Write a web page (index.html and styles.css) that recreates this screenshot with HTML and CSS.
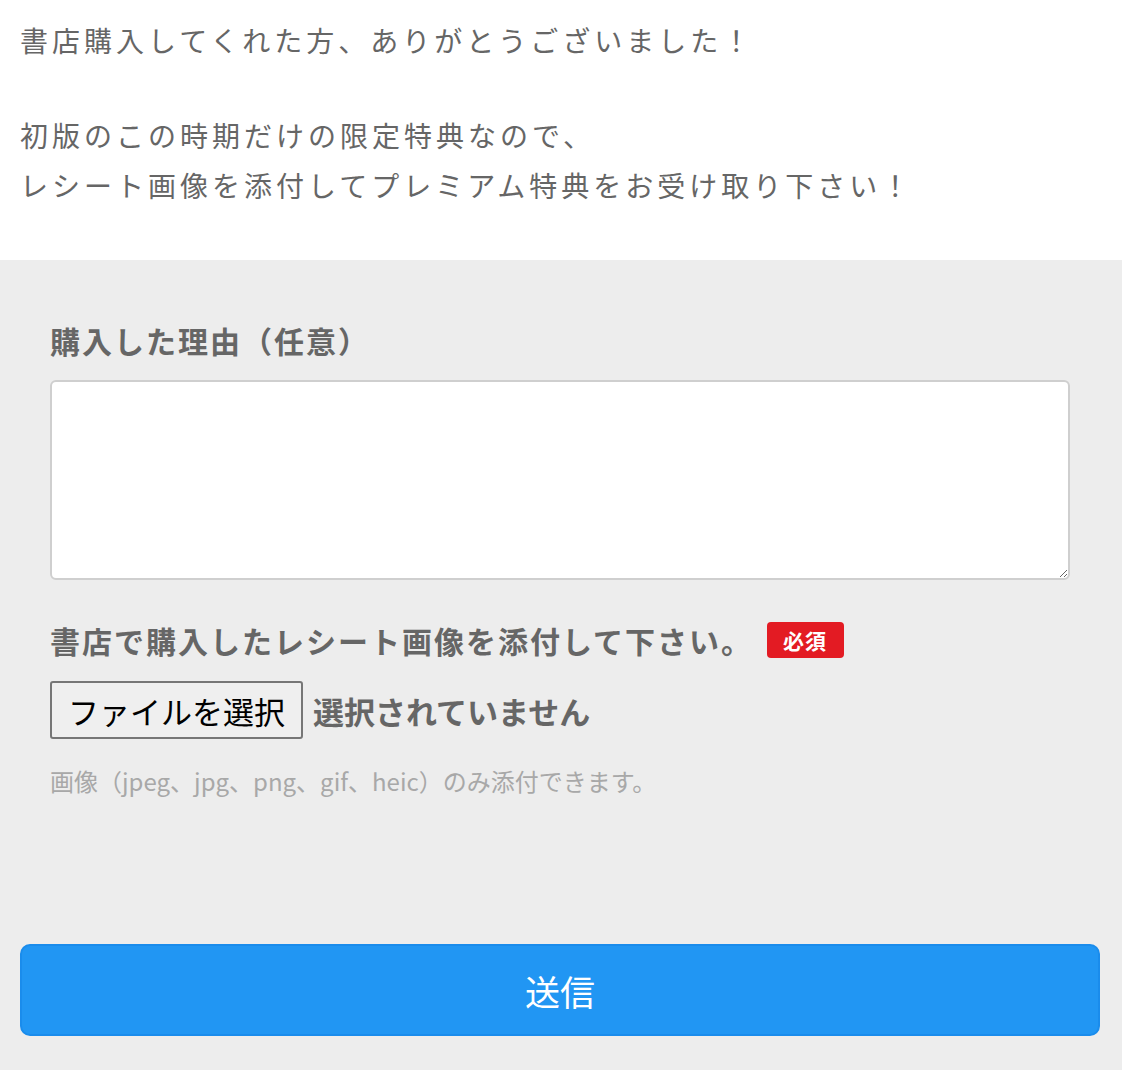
FILE: index.html
```html
<!DOCTYPE html>
<html lang="ja">
<head>
<meta charset="utf-8">
<title>レシート送信</title>
<link rel="stylesheet" href="styles.css">
</head>
<body>
<section class="intro">
  <p class="intro-p">書店購入してくれた方、ありがとうございました！</p>
  <p class="intro-p">初版のこの時期だけの限定特典なので、<br>レシート画像を添付してプレミアム特典をお受け取り下さい！</p>
</section>
<section class="form">
  <div class="fields">
    <div class="field">
      <label class="label">購入した理由（任意）</label>
      <textarea class="textarea"></textarea>
    </div>
    <div class="field field-file">
      <div class="label-row">
        <span class="label">書店で購入したレシート画像を添付して下さい。</span>
        <span class="badge">必須</span>
      </div>
      <div class="file-row">
        <span class="file-btn">ファイルを選択</span>
        <span class="file-status">選択されていません</span>
      </div>
      <p class="hint">画像（jpeg、jpg、png、gif、heic）のみ添付できます。</p>
    </div>
  </div>
  <div class="submit-wrap">
    <button class="submit" type="button">送信</button>
  </div>
</section>
</body>
</html>
```

FILE: styles.css
```css
html, body {
  margin: 0;
  padding: 0;
}
body {
  font-family: "Noto Sans CJK JP", "Noto Sans", "Liberation Sans", sans-serif;
  color: #666;
  background: #ededed;
}
.intro {
  background: #fff;
  padding: 15px 20px 50px;
}
.intro-p {
  margin: 0;
  font-size: 28px;
  line-height: 50px;
  letter-spacing: 4px;
  color: #666;
}
.intro-p + .intro-p {
  margin-top: 45px;
}
.form {
  background: #ededed;
  padding: 60px 0 40px;
}
.fields {
  padding: 0 52px 0 50px;
}
.label {
  display: block;
  font-size: 30px;
  font-weight: bold;
  line-height: 40px;
  letter-spacing: 2px;
  color: #666;
}
.textarea {
  display: block;
  box-sizing: border-box;
  width: 100%;
  height: 200px;
  margin: 20px 0 0;
  border: 2px solid #cfcfcf;
  border-radius: 6px;
  background: #fff;
  resize: vertical;
}
.field-file {
  margin-top: 40px;
}
.label-row {
  display: flex;
  align-items: center;
  gap: 14px;
}
.label-row .label {
  display: inline-block;
}
.badge {
  background: #e31b23;
  color: #fff;
  font-size: 21px;
  font-weight: bold;
  line-height: 36px;
  padding: 0 17px 0 16px;
  border-radius: 4px;
  letter-spacing: 1px;
}
.file-row {
  display: flex;
  align-items: center;
  gap: 10px;
  margin-top: 21px;
}
.file-btn {
  box-sizing: border-box;
  height: 58px;
  padding: 0 16px;
  display: flex;
  align-items: center;
  border: 2px solid #767676;
  border-radius: 3px;
  background: #efefef;
  color: #000;
  font-size: 31px;
}
.file-status {
  font-size: 31px;
  font-weight: bold;
  color: #666;
}
.hint {
  margin: 26px 0 0;
  font-size: 24px;
  line-height: 32px;
  color: #a8a8a8;
}
.submit-wrap {
  padding: 147px 22px 0 20px;
}
.submit {
  display: block;
  box-sizing: border-box;
  width: 100%;
  height: 92px;
  border: 2px solid #1a8cec;
  border-radius: 10px;
  background: #2196f3;
  color: #fff;
  font-family: inherit;
  font-size: 35px;
}
```
